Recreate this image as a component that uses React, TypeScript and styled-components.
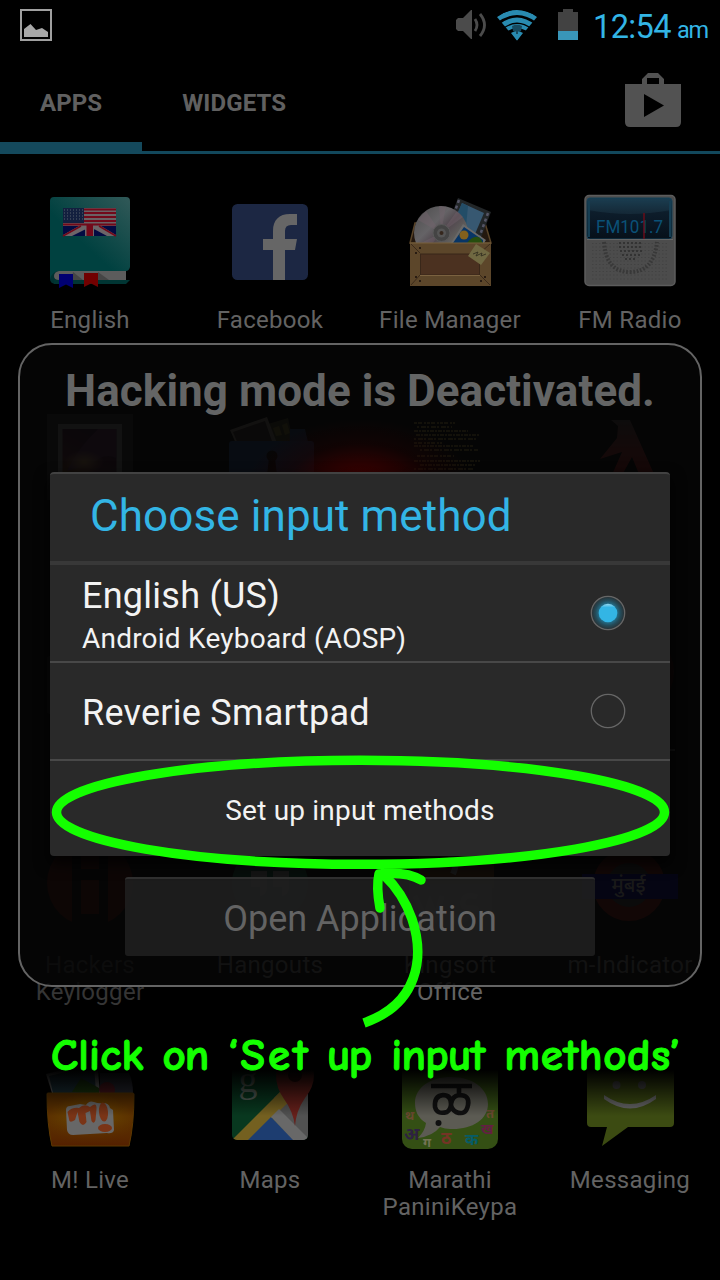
import React from "react";
import styled, { createGlobalStyle } from "styled-components";

const GlobalStyle = createGlobalStyle`
  html, body { margin: 0; padding: 0; background: #000; }
  * { box-sizing: border-box; }
`;

const Screen = styled.main`
  position: relative;
  width: 720px;
  height: 1280px;
  overflow: hidden;
  background: #000;
  color: #666;
  font-family: Roboto, "Noto Sans", sans-serif;
`;

const StatusBar = styled.header`
  display: flex;
  align-items: center;
  height: 50px;
  padding: 0 12px 0 19px;
`;

const StatusIcons = styled.div`
  display: flex;
  align-items: center;
  margin-left: auto;
`;

const StatusIcon = styled.svg<{ $gap: number }>`
  display: block;
  height: 34px;
  margin-right: ${(p) => p.$gap}px;
`;

const Clock = styled.div`
  display: flex;
  align-items: baseline;
  gap: 6px;
  width: 115px;
  height: 50px;
  padding-top: 1px;
  color: #33b5e5;
  font-size: 32.5px;
  letter-spacing: -0.6px;
  line-height: 52px;
  white-space: nowrap;
`;

const Meridiem = styled.span`
  font-size: 23.5px;
  letter-spacing: -1.2px;
`;

const TabBar = styled.nav`
  display: flex;
  height: 104px;
  border-bottom: 1px solid #12485c;
  box-shadow: inset 0 -2px #12485c;
`;

const Tab = styled.div<{ $active?: boolean }>`
  height: 104px;
  padding: 0 40px;
  border-bottom: ${(p) => (p.$active ? "12px solid #14495c" : "0")};
  color: #606060;
  font-size: 24px;
  font-weight: 700;
  line-height: 106px;
  letter-spacing: 0.1px;
  white-space: nowrap;
`;

const StoreButton = styled.svg`
  display: block;
  width: 58px;
  height: 56px;
  margin: 22px 38px 0 auto;
`;

const AppGrid = styled.section`
  display: grid;
  grid-template-columns: repeat(4, 180px);
  grid-auto-rows: 215px;
  padding-top: 39px;
`;

const AppCell = styled.div`
  display: flex;
  flex-direction: column;
  align-items: center;
`;

const AppIcon = styled.svg`
  display: block;
  width: 96px;
  height: 96px;
  margin-bottom: 18px;
  overflow: visible;
`;

const AppLabel = styled.span<{ $shade: string }>`
  color: ${(p) => p.$shade};
  font-size: 24px;
  letter-spacing: 0.3px;
  line-height: 27px;
  text-align: center;
  white-space: pre;
`;

const ModeWindow = styled.section`
  position: absolute;
  left: 18px;
  top: 343px;
  display: flex;
  flex-direction: column;
  align-items: center;
  width: 684px;
  height: 644px;
  border: 2px solid #646464;
  border-radius: 34px;
  background: rgba(6, 6, 6, 0.87);
`;

const ModeTitle = styled.h1`
  margin: 18px 0 0;
  color: #646565;
  font-size: 44px;
  font-weight: 700;
  letter-spacing: 0.06px;
  line-height: 56px;
  white-space: nowrap;
`;

const RedGlow = styled.div`
  width: 230px;
  height: 140px;
  background: radial-gradient(closest-side, #500000 0%, rgba(66, 0, 0, 0.8) 25%, rgba(36, 0, 0, 0.35) 65%, transparent 100%);
`;

const OpenButton = styled.div`
  width: 470px;
  height: 79px;
  margin-top: auto;
  margin-bottom: 29px;
  border-top: 2px solid #303030;
  border-radius: 3px;
  background: rgba(32, 32, 32, 0.88);
  color: #636363;
  font-size: 36px;
  line-height: 81px;
  text-align: center;
`;

const Dialog = styled.section`
  position: absolute;
  left: 50px;
  top: 472px;
  width: 620px;
  height: 384px;
  border-top: 2px solid #424242;
  border-radius: 4px;
  background: #292929;
  box-shadow: 0 7px 14px 2px rgba(0, 0, 0, 0.75);
  color: #f3f3f3;
`;

const DialogTitle = styled.h2`
  height: 91px;
  margin: 0;
  padding-left: 40px;
  border-bottom: 4px solid #383838;
  color: #33b5e5;
  font-size: 44px;
  font-weight: 400;
  letter-spacing: 0.1px;
  line-height: 84px;
`;

const Option = styled.div`
  display: flex;
  align-items: center;
  justify-content: space-between;
  height: 98px;
  padding: 0 44px 0 32px;
  border-bottom: 2px solid #484848;
`;

const OptionText = styled.div<{ $drop: number }>`
  padding-top: ${(p) => p.$drop}px;
`;

const OptionName = styled.div`
  font-size: 36px;
  letter-spacing: 0.25px;
  line-height: 42px;
`;

const OptionDetail = styled.div`
  font-size: 28px;
  letter-spacing: 0.22px;
  line-height: 44px;
`;

const Radio = styled.svg`
  width: 36px;
  height: 36px;
`;

const SetupButton = styled.div`
  font-size: 28px;
  letter-spacing: 0.2px;
  line-height: 100px;
  text-align: center;
`;

const Shade = styled.div`
  position: absolute;
  left: 0;
  top: 1020px;
  width: 720px;
  height: 96px;
  background: linear-gradient(#000 52%, rgba(0, 0, 0, 0.75) 65%, transparent);
`;

const Marker = styled.svg`
  position: absolute;
  left: 0;
  top: 740px;
  width: 720px;
  height: 300px;
`;

const Caption = styled.div`
  position: absolute;
  left: 51px;
  top: 1028px;
  display: flex;
  justify-content: space-between;
  width: 629px;
  color: #14ff00;
  font-family: "Comic Sans MS", "Comic Neue", Lato, sans-serif;
  font-size: 45px;
  font-weight: 700;
  line-height: 54px;
  white-space: nowrap;
  -webkit-text-stroke: 1px #14ff00;
  stroke-linejoin: round;
`;

const Word = styled.span<{ $track: number }>`
  margin-right: ${(p) => -p.$track}px;
  letter-spacing: ${(p) => p.$track}px;
`;

const EnglishIcon = () => (
  <AppIcon viewBox="0 0 96 96">
    <defs>
      <linearGradient id="book" x1="0.45" y1="0.6" x2="1" y2="0">
        <stop offset="0" stopColor="#004140" />
        <stop offset="1" stopColor="#315958" />
      </linearGradient>
    </defs>
    <rect x="8" y="10" width="20" height="81" rx="5" fill="#003130" />
    <path d="M12 87H88L84 91H12Z" fill="#003533" />
    <path d="M12 4H84Q88 4 88 8V74Q87 78 84 78H16Q10 79 8 86V8Q8 4 12 4Z" fill="url(#book)" />
    <path d="M84 78H17Q12 79 12 83T17 87H84Z" fill="#5c5c5c" />
    <path d="M31 79L41 87H30ZM56 79L67 87H55Z" fill="#454545" />
    <rect x="21" y="15" width="53" height="28" fill="#6a6164" />
    <path d="M42 16.500H74M42 20H74M42 24H74M42 28H74M21 31.500H74" stroke="#72091a" strokeWidth="2" />
    <rect x="21" y="15" width="21" height="15" fill="#13203f" />
    <path d="M22 17H41M22 20H41M22 23H41M22 26H41" stroke="#56606d" strokeWidth="1" strokeDasharray="1 2" />
    <path d="M21 33H43V43H21ZM52 33H74V43H52Z" fill="#030b42" />
    <path d="M21 42L37 33H44V36L30 43H21ZM74 42L59 33H52V36L65 43H74ZM43 33H52V43H43Z" fill="#6c6568" />
    <path d="M21 43L39 33M74 43L57 33" stroke="#72091a" strokeWidth="1.600" />
    <path d="M44.500 31H51V43H44.500Z" fill="#72091a" />
    <path d="M17 81H31V95L24 91.500L17 95Z" fill="#000071" />
    <path d="M42 80H56V94L49 90.500L42 94Z" fill="#710000" />
  </AppIcon>
);

const FacebookIcon = () => (
  <AppIcon viewBox="0 0 96 96">
    <rect x="10" y="11" width="76" height="76" rx="5.500" fill="#1c2743" />
    <path d="M51 87V57H41V46H51V38C51 27 57 21 68 21H75V32H69Q63 32 63 38V46H75L73 57H63V87Z" fill="#666" />
  </AppIcon>
);

const FileManagerIcon = () => (
  <AppIcon viewBox="0 0 96 96">
    <defs>
      <linearGradient id="disc" x1="0" y1="0" x2="1" y2="1">
        <stop offset="0" stopColor="#4b4b4b" />
        <stop offset="0.35" stopColor="#656366" />
        <stop offset="0.5" stopColor="#51474e" />
        <stop offset="0.7" stopColor="#63645f" />
        <stop offset="1" stopColor="#474751" />
      </linearGradient>
    </defs>
    <path d="M13 30H83L89 50H8Z" fill="#24180f" stroke="#584328" strokeWidth="1.500" />
    <path d="M56 5L89 19L75 55L43 40Z" fill="#222628" />
    <path d="M60 10L82 20L70 48L48 38Z" fill="#375871" />
    <path d="M60 10L66 13L63 44L48 38Z" fill="#234d67" />
    <path d="M57 7L53 18M86 20L77 45" stroke="#556" strokeWidth="2.500" strokeDasharray="3 3" />
    <circle cx="39" cy="40" r="27" fill="url(#disc)" />
    <path d="M39 40L16 27L24 18ZM39 40L37 13L44 13.500ZM39 40L55 18L61 24ZM39 40L22 60L15 52Z" fill="#75656d" opacity="0.4" />
    <circle cx="39.500" cy="40" r="8.500" fill="#444" stroke="#595959" />
    <circle cx="39.500" cy="40" r="4.500" fill="#555" />
    <circle cx="39.500" cy="40" r="2" fill="#35271d" />
    <path d="M61 31L84 47L80 53H47Z" fill="#696969" />
    <path d="M62 34L81 47V50H51Z" fill="#073565" />
    <path d="M65 50Q72 41 78 45L81 50Z" fill="#264d0e" />
    <circle cx="62" cy="42" r="4.500" fill="#82601c" />
    <rect x="8" y="50" width="81" height="43" fill="#5c462a" />
    <path d="M8 50H89" stroke="#79603d" />
    <rect x="18.500" y="61" width="59" height="21" fill="#4b3120" stroke="#392719" />
    <path d="M9 51L18 60M9 92L18 82M88 51L78 60M88 92L78 82" stroke="#3b2a1a" />
    <path d="M18 82.500H78" stroke="#7b6240" />
    <path d="M13 60h2M13 84h2M17 55h2M17 88h2M82 84h2M78 88h2" stroke="#291c12" strokeWidth="2" />
    <path d="M74 51L88 60L79 72L66 63Z" fill="#706942" />
    <path d="M71 61L76 59L74 63L80 60L79 63L84 61" fill="none" stroke="#333020" strokeWidth="0.900" />
  </AppIcon>
);

const RadioIcon = () => (
  <AppIcon viewBox="0 0 96 96">
    <defs>
      <linearGradient id="dial" x1="0" y1="0" x2="0" y2="1">
        <stop offset="0" stopColor="#16394d" />
        <stop offset="0.35" stopColor="#0d1d2b" />
        <stop offset="1" stopColor="#06101a" />
      </linearGradient>
    </defs>
    <rect x="3" y="2.500" width="90" height="90" rx="4" fill="#4c4c4c" stroke="#5c5c5c" strokeWidth="1.500" />
    <rect x="5" y="5" width="85" height="41" rx="3" fill="url(#dial)" stroke="#174259" strokeWidth="1" />
    <path d="M6 17Q48 25 89 17V6H6Z" fill="#29485a" opacity="0.3" />
    <path d="M7 8V44M88 8V44" stroke="#153e53" strokeWidth="2" />
    <text x="14" y="40" fontFamily="Roboto, sans-serif" fontSize="19" textLength="67" lengthAdjust="spacingAndGlyphs" fill="#0a5177">FM101.7</text>
    <path d="M62 20V46" stroke="#680d18" strokeWidth="1.500" />
    <path d="M5 46.500H91" stroke="#666" />
    <path d="M10 50.500H86M10 54H86M10 57.500H86M10 61H86M10 64.500H86M10 68H86M10 71.500H86M10 75H86M10 78.500H86M10 82H86M10 86H86" stroke="#424242" strokeWidth="1" strokeDasharray="1.500 2" />
    <path d="M22 49Q24 79 48 79T75 49" fill="none" stroke="#383838" strokeWidth="4" strokeDasharray="1.700 1.700" />
    <path d="M37 50H61M37 54H61M38 58H60M40 62H58M43 66H54" stroke="#333" strokeWidth="2" strokeDasharray="2 2" />
  </AppIcon>
);

const GalleryIcon = () => (
  <AppIcon viewBox="0 0 96 96">
    <defs>
      <linearGradient id="photo" x1="0.7" y1="0" x2="0.2" y2="1">
        <stop offset="0" stopColor="#25102c" />
        <stop offset="0.6" stopColor="#41192d" />
        <stop offset="1" stopColor="#5a3a08" />
      </linearGradient>
      <radialGradient id="flare">
        <stop offset="0" stopColor="#8a6840" />
        <stop offset="1" stopColor="#8a6840" stopOpacity="0" />
      </radialGradient>
    </defs>
    <rect x="5" y="6" width="86" height="86" fill="#242424" />
    <rect x="16" y="16" width="64" height="66" fill="#646464" />
    <rect x="20.500" y="21" width="54" height="56" fill="url(#photo)" />
    <path d="M25 63Q36 40 56 21H74V50Q62 44 50 56Z" fill="#452040" />
    <ellipse cx="42" cy="54" rx="20" ry="12" fill="url(#flare)" />
  </AppIcon>
);

const FolderLockIcon = () => (
  <AppIcon viewBox="0 0 96 96">
    <path d="M46 16L66 10L73 42H52Z" fill="#342f1d" />
    <path d="M51 20L57 18L60 27L54 28ZM60 17L65 15L68 25L63 27Z" fill="#5d5722" />
    <path d="M8 22L45 9L56 38H15Z" fill="#656058" />
    <path d="M11 24L43 13L51 36H16Z" fill="#2b2220" />
    <path d="M68 21H83L86 34V85H66Z" fill="#1a3258" />
    <rect x="7" y="33" width="85" height="56" rx="3" fill="#183964" />
    <circle cx="50" cy="48" r="5.500" fill="#07090c" />
    <path d="M47 50H53L56 76H44Z" fill="#07090c" />
  </AppIcon>
);

const ConsoleIcon = () => (
  <AppIcon viewBox="0 0 96 96">
    <g stroke="#6f5d26" strokeWidth="2">
      <path d="M12 15H53M12 35H40M15 48H52" strokeDasharray="3 1 4 2 2 1" />
      <path d="M15 19H50M12 31H74M18 42H76M12 61H72" strokeDasharray="2 2 5 1" />
      <path d="M12 23H66M14 27H78M12 38H71M12 53H78M18 57H73" strokeDasharray="4 1 2 1" />
    </g>
  </AppIcon>
);

const RedArrowIcon = () => (
  <AppIcon viewBox="0 0 96 96">
    <defs>
      <linearGradient id="rise" x1="0" y1="0" x2="0" y2="1">
        <stop offset="0" stopColor="#403838" />
        <stop offset="0.5" stopColor="#722424" />
        <stop offset="1" stopColor="#7e1010" />
      </linearGradient>
    </defs>
    <path d="M29 12H48L72 66H57L50 49L39 69H29L40 44L18 51L35 30L36 18Z" fill="url(#rise)" />
  </AppIcon>
);

const BlankTileIcon = () => (
  <AppIcon viewBox="0 0 96 96">
    <rect x="5" y="33" width="86" height="58" rx="3" fill="#242424" />
  </AppIcon>
);

const RoundTileIcon = () => (
  <AppIcon viewBox="0 0 96 96">
    <circle cx="49" cy="49" r="43" fill="#380b0b" />
    <path d="M80 127H93" stroke="#555" strokeWidth="2" />
  </AppIcon>
);

const HackersIcon = () => (
  <AppIcon viewBox="0 0 96 96">
    <defs>
      <clipPath id="hackClip"><circle cx="48" cy="45" r="43" /></clipPath>
    </defs>
    <path clipPath="url(#hackClip)" d="M4 0H30V90H4ZM39 0H57V31H39ZM39 42H57V76H39ZM66 0H94V90H66Z" fill="#3e0903" />
  </AppIcon>
);

const HangoutsIcon = () => (
  <AppIcon viewBox="0 0 96 96">
    <circle cx="48" cy="45" r="38" fill="#0b4830" />
    <path d="M29 33H45V48Q45 57 38 58V49H29ZM51 33H67V48Q67 57 60 58V49H51Z" fill="#777" />
  </AppIcon>
);

const OfficeIcon = () => (
  <AppIcon viewBox="0 0 96 96">
    <path d="M17 16H92V50H17Z" fill="#52270b" />
    <path d="M46 21Q58 20 51 36" stroke="#777" strokeWidth="6" fill="none" />
    <rect x="7" y="46" width="45" height="46" fill="#18264a" />
    <rect x="48" y="46" width="42" height="46" fill="#26471a" />
    <path d="M13 58L23 79L28 64L34 79L40 58" fill="none" stroke="#888" strokeWidth="5" />
    <path d="M75 59Q63 55 61 63T70 70T65 80T56 77" fill="none" stroke="#888" strokeWidth="5" />
  </AppIcon>
);

const IndicatorIcon = () => (
  <AppIcon viewBox="0 0 96 96">
    <circle cx="47" cy="47" r="29" fill="#303030" stroke="#651109" strokeWidth="14" />
    <rect x="0" y="36" width="96" height="25" fill="#00006c" />
    <text x="46.500" y="54" fontFamily="Noto Sans, sans-serif" fontSize="20" fontWeight="500" textAnchor="middle" fill="#999">मुंबई</text>
  </AppIcon>
);

const LiveIcon = () => (
  <AppIcon viewBox="0 0 96 96">
    <defs>
      <radialGradient id="pouch">
        <stop offset="0" stopColor="#6b4900" />
        <stop offset="1" stopColor="#5b3000" />
      </radialGradient>
      <linearGradient id="pouchShade" x1="0" y1="0" x2="0" y2="1">
        <stop offset="0.5" stopColor="#572700" stopOpacity="0" />
        <stop offset="1" stopColor="#542000" />
      </linearGradient>
    </defs>
    <path d="M4 21L55 8L58 40H10Z" fill="#646464" />
    <path d="M7 23L52 12L54 40H11Z" fill="#1b3038" />
    <path d="M58 20H87Q91 29 91 40H58Z" fill="#272831" />
    <path d="M30 39L39 25L57 35V40Z" fill="#1a360d" />
    <circle cx="65" cy="37" r="8" fill="#4b151c" />
    <path d="M5 41Q5 40 6 40H90Q92 40 92 41Q92 72 87 93H10Q5 72 5 41Z" fill="url(#pouch)" />
    <path d="M5 41Q5 40 6 40H90Q92 40 92 41Q92 72 87 93H10Q5 72 5 41Z" fill="url(#pouchShade)" stroke="#5c3800" />
    <path d="M24 57Q24 53 28 53L38 51L44 52Q47 47 52 49Q57 51 61 50Q67 50 68 55L71 57L72 77Q71 81 65 80L31 82Q26 82 25 77Z" fill="#676767" />
    <path d="M25.500 59Q30 54 37 55Q42 50 48 54Q55 48 54.500 56L53.500 67Q52 72 49.500 68L48 58L43.500 60L44.500 69Q41 75 37.500 69L35.500 59L33 67Q27 71 27 66Z" fill="#7a3416" />
    <ellipse cx="61.500" cy="59" rx="4.500" ry="9.500" fill="#7a3416" transform="rotate(-5 61.500 59)" />
    <ellipse cx="63" cy="75" rx="7" ry="4" fill="#7a3416" />
  </AppIcon>
);

const MapsIcon = () => (
  <AppIcon viewBox="0 0 96 96">
    <defs>
      <clipPath id="mapClip"><rect x="10" y="11" width="76" height="76" rx="5" /></clipPath>
    </defs>
    <g clipPath="url(#mapClip)">
      <rect x="10" y="11" width="76" height="76" fill="#08381f" />
      <path d="M52 45L86 11V87H66Z" fill="#515151" />
      <path d="M8 89L66 31L74 42L24 90Z" fill="#746020" />
      <path d="M49 64L25 88H73Z" fill="#1d3d70" />
      <path d="M49 64L57 56L88 87H71Z" fill="#686868" />
    </g>
    <text x="16.500" y="39" fontFamily="Liberation Serif, serif" fontSize="38" fill="#57645c">g</text>
    <path d="M54 22A19 19 0 0 1 92 22Q92 34 83 45Q74 58 73 73Q71 58 62 46Q54 35 54 22Z" fill="#67201b" />
    <circle cx="73" cy="22" r="7" fill="#260907" />
  </AppIcon>
);

const MarathiIcon = () => (
  <AppIcon viewBox="0 0 96 96">
    <rect width="96" height="96" rx="10" fill="#344f14" />
    <g fontFamily="Noto Sans, sans-serif" fontWeight="700">
      <text x="2" y="87" fontSize="18" fill="#2e2141">अ</text>
      <text x="21" y="94" fontSize="13" fill="#737353">ग</text>
      <text x="39" y="91" fontSize="17" fill="#743425">ठ</text>
      <text x="63" y="92" fontSize="16" fill="#065c68">क</text>
      <text x="79" y="81" fontSize="14" fill="#651e43">ख</text>
      <text x="84" y="65" fontSize="13" fill="#6b4930">त</text>
      <text x="3" y="67" fontSize="13" fill="#6b4930">थ</text>
    </g>
    <path d="M49 24C70 24 86 35 86 51C86 67 69 77 48 76Q43 76 38 74Q31 83 16 85Q23 78 24 70C16 65 13 58 13 50C13 34 29 24 49 24Z" fill="#5c5b53" />
    <path d="M29 33H70M57 33V42M57 42Q68 42 66 52Q64 63 54 59Q49 56 49 51Q49 42 41 42Q32 43 33 54Q35 62 45 59Q49 56 49 51Q50 43 57 42" fill="none" stroke="#101010" strokeWidth="4.600" />
    <circle cx="36.500" cy="70" r="3" fill="#101010" />
  </AppIcon>
);

const MessagingIcon = () => (
  <AppIcon viewBox="0 0 96 96">
    <path d="M9 12H88Q92 12 92 16V70Q92 74 88 74H46L20 93L25 74H9Q5 74 5 70V16Q5 12 9 12Z" fill="#3c4b12" />
    <circle cx="34.500" cy="32" r="4" fill="#505050" />
    <circle cx="60" cy="32" r="4" fill="#505050" />
    <path d="M22 42Q48 60 74 42V46Q48 65 22 46Z" fill="#666" />
  </AppIcon>
);

type AppEntry = { name: string; icon: React.ReactNode; shade?: string };

const apps: AppEntry[] = [
  { name: "English", icon: <EnglishIcon /> },
  { name: "Facebook", icon: <FacebookIcon /> },
  { name: "File Manager", icon: <FileManagerIcon /> },
  { name: "FM Radio", icon: <RadioIcon /> },
  { name: "", icon: <GalleryIcon /> },
  { name: "", icon: <FolderLockIcon /> },
  { name: "", icon: <ConsoleIcon /> },
  { name: "", icon: <RedArrowIcon /> },
  { name: "", icon: <BlankTileIcon /> },
  { name: "", icon: null },
  { name: "", icon: null },
  { name: "", icon: <RoundTileIcon /> },
  { name: "Hackers\nKeylogger", icon: <HackersIcon />, shade: "#353535" },
  { name: "Hangouts", icon: <HangoutsIcon /> },
  { name: "Kingsoft\nOffice", icon: <OfficeIcon /> },
  { name: "m-Indicator", icon: <IndicatorIcon /> },
  { name: "M! Live", icon: <LiveIcon /> },
  { name: "Maps", icon: <MapsIcon /> },
  { name: "Marathi\nPaniniKeypa", icon: <MarathiIcon /> },
  { name: "Messaging", icon: <MessagingIcon /> },
];

const RadioMark = ({ checked = false }: { checked?: boolean }) => (
  <Radio viewBox="0 0 36 36">
    <defs>
      <radialGradient id="radioGlow">
        <stop offset="0.5" stopColor="#237695" />
        <stop offset="0.75" stopColor="#244b59" />
        <stop offset="1" stopColor="#292f32" />
      </radialGradient>
      <linearGradient id="radioDot" x1="0" y1="0" x2="0" y2="1">
        <stop offset="0" stopColor="#9bd9ef" />
        <stop offset="0.2" stopColor="#33b5e5" />
      </linearGradient>
    </defs>
    <circle cx="18" cy="18" r="16.700" fill={checked ? "url(#radioGlow)" : "none"} stroke="#666" strokeWidth="1.300" />
    {checked && <circle cx="18" cy="18" r="9.300" fill="url(#radioDot)" />}
  </Radio>
);

export default function App() {
  return (
    <>
      <GlobalStyle />
      <Screen>
        <StatusBar>
          <StatusIcon $gap={0} width="34" viewBox="0 0 34 34">
            <rect x="2" y="2" width="30" height="30" fill="none" stroke="#a0a0a0" strokeWidth="2" />
            <path d="M5 29V21L11.500 16L17 22L23 20L29 24V29Z" fill="#a8a8a8" />
          </StatusIcon>
          <StatusIcons>
            <StatusIcon $gap={10} width="31" viewBox="0 0 31 34">
              <path d="M0 12L2 10H7L15 2H16V31H15L7 23H2L0 21Z" fill="#4b4b4b" />
              <path d="M19 11Q23 17 19 23M24 6Q33 17 24 28" fill="none" stroke="#4b4b4b" strokeWidth="2.800" />
            </StatusIcon>
            <StatusIcon $gap={20} width="40" viewBox="0 0 40 34">
              <defs>
                <clipPath id="wifiClip"><path d="M0 9Q20 -6 40 9L20 33Z" /></clipPath>
              </defs>
              <g clipPath="url(#wifiClip)" fill="none" stroke="#298bb1" strokeWidth="5">
                <path d="M-2 13Q20 -4 42 13M3 19Q20 5 37 19" />
                <path d="M7 23Q20 13 33 23" strokeWidth="4" />
                <path d="M15 18Q20 15.500 25 18L24 23H16Z" fill="#164a60" stroke="none" />
                <path d="M14 25Q20 21 26 25L20 33Z" fill="#298bb1" stroke="none" />
                <path d="M20 23V26" stroke="#164a60" strokeWidth="2" />
              </g>
            </StatusIcon>
            <StatusIcon $gap={14} width="22" viewBox="0 0 22 34">
              <path d="M1 4H6V1H16V4H21V23H1Z" fill="#424242" />
              <path d="M1 23H21V32H1Z" fill="#3996b9" />
            </StatusIcon>
            <Clock>12:54<Meridiem>am</Meridiem></Clock>
          </StatusIcons>
        </StatusBar>
        <TabBar>
          <Tab $active>APPS</Tab>
          <Tab>WIDGETS</Tab>
          <StoreButton viewBox="0 0 58 56">
            <path fillRule="evenodd" fill="#525252" d="M1 12H18V7L24 1H34L40 7V12H57V50Q57 55 52 55H6Q1 55 1 50ZM23 12H35V6H23ZM20 22V45L40 33.500Z" />
          </StoreButton>
        </TabBar>
        <AppGrid>
          {apps.map((app, i) => (
            <AppCell key={i}>
              {app.icon}
              {app.name && <AppLabel $shade={app.shade ?? "#636363"}>{app.name}</AppLabel>}
            </AppCell>
          ))}
        </AppGrid>
        <ModeWindow>
          <ModeTitle>Hacking mode is Deactivated.</ModeTitle>
          <RedGlow />
          <OpenButton>Open Application</OpenButton>
        </ModeWindow>
        <Dialog>
          <DialogTitle>Choose input method</DialogTitle>
          <Option>
            <OptionText $drop={9}>
              <OptionName>English (US)</OptionName>
              <OptionDetail>Android Keyboard (AOSP)</OptionDetail>
            </OptionText>
            <RadioMark checked />
          </Option>
          <Option>
            <OptionText $drop={4}>
              <OptionName>Reverie Smartpad</OptionName>
            </OptionText>
            <RadioMark />
          </Option>
          <SetupButton>Set up input methods</SetupButton>
        </Dialog>
        <Shade />
        <Marker viewBox="0 740 720 300" fill="none" stroke="#14ff00" strokeWidth="9.500">
          <ellipse cx="360.500" cy="812.300" rx="304" ry="52" />
          <path d="M364 1023C418 1004 425 958 412 919Q403 893 384 875" />
          <path d="M421 880Q406 871 379 874Q376 887 380 908" strokeLinecap="round" strokeLinejoin="round" />
        </Marker>
        <Caption>
          <Word $track={0.2}>Click</Word>
          <Word $track={-1}>on</Word>
          <Word $track={3}>‘Set</Word>
          <Word $track={-1.5}>up</Word>
          <Word $track={-0.7}>input</Word>
          <Word $track={0.6}>methods’</Word>
        </Caption>
      </Screen>
    </>
  );
}
